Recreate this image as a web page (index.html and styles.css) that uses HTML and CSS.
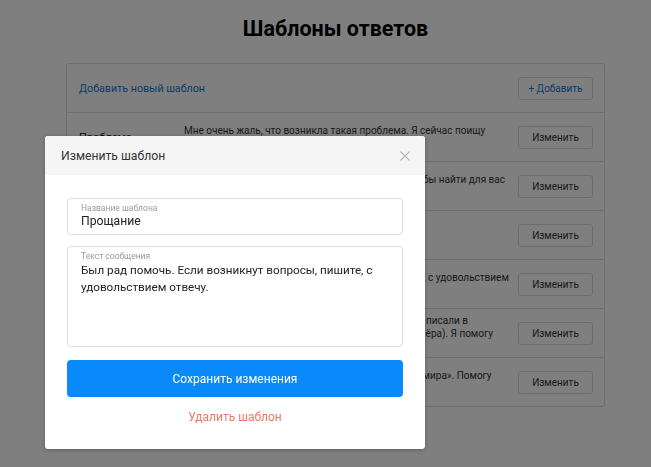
FILE: index.html
```html
<!DOCTYPE html>
<html lang="ru">
<head>
    <meta charset="UTF-8">
    <meta name="viewport" content="width=device-width, initial-scale=1.0">
    <title>Шаблоны ответов</title>
    <link rel="stylesheet" href="styles.css">
</head>
<body>
    <div class="container">
        <h1>Шаблоны ответов</h1>

        <div class="templates">
            <div class="row row-add">
                <span class="add-title">Добавить новый шаблон</span>
                <button class="btn btn-add">+ Добавить</button>
            </div>
            <div class="row">
                <span class="row-name">Проблема</span>
                <span class="row-text">Мне очень жаль, что возникла такая проблема. Я сейчас поищу решение и вернусь к вам.</span>
                <button class="btn">Изменить</button>
            </div>
            <div class="row">
                <span class="row-name">Ожидание</span>
                <span class="row-text">Подождите, пожалуйста, я просмотрю данные, чтобы найти для вас лучший вариант.</span>
                <button class="btn">Изменить</button>
            </div>
            <div class="row">
                <span class="row-name">Приветствие</span>
                <span class="row-text">Здравствуйте! Чем могу помочь?</span>
                <button class="btn">Изменить</button>
            </div>
            <div class="row">
                <span class="row-name">Прощание</span>
                <span class="row-text">Был рад помочь. Если возникнут вопросы, пишите, с удовольствием отвечу.</span>
                <button class="btn">Изменить</button>
            </div>
            <div class="row">
                <span class="row-name">Номер заказа</span>
                <span class="row-text">Подскажите, пожалуйста, номер заказа, о котором писали в поддержку (или номер телефона из профиля партнёра). Я помогу разобраться.</span>
                <button class="btn">Изменить</button>
            </div>
            <div class="row">
                <span class="row-name">Каталог</span>
                <span class="row-text">Все варианты собраны в разделе «Подарки для кумира». Помогу подобрать подарок.</span>
                <button class="btn">Изменить</button>
            </div>
        </div>
    </div>

    <!-- окно редактирования -->
    <div class="overlay"></div>
    <div class="modal">
        <div class="modal-head">
            <span>Изменить шаблон</span>
            <svg class="close" width="10" height="10" viewBox="0 0 10 10">
                <path d="M0.5 0.5L9.5 9.5M9.5 0.5L0.5 9.5" stroke="#b4b4b4" stroke-width="1.1" fill="none"/>
            </svg>
        </div>
        <div class="modal-body">
            <div class="field">
                <div class="field-label">Название шаблона</div>
                <div class="field-value">Прощание</div>
            </div>
            <div class="field field-area">
                <div class="field-label">Текст сообщения</div>
                <div class="field-value">Был рад помочь. Если возникнут вопросы, пишите, с удовольствием отвечу.</div>
            </div>
            <button class="btn-save">Сохранить изменения</button>
            <div class="delete">Удалить шаблон</div>
        </div>
    </div>
</body>
</html>
```

FILE: styles.css
```css
* {
    box-sizing: border-box;
}
body {
    margin: 0;
    font-family: Roboto, 'Liberation Sans', sans-serif;
    background-color: #fff;
    color: #222;
}
.container {
    width: 539px;
    margin-left: 66px;
}
h1 {
    text-align: center;
    font-size: 21.5px;
    line-height: 24px;
    font-weight: 700;
    color: #000;
    margin: 17px 0 22px;
}
.templates {
    border: 1px solid #ddd;
    border-radius: 3px;
}
.row {
    display: grid;
    grid-template-columns: 105px 1fr 75px;
    align-items: center;
    height: 49px;
    padding: 0 11px 0 12px;
    border-bottom: 1px solid #ddd;
}
.row:last-child {
    height: 48px;
    border-bottom: none;
}
.row-name {
    font-size: 11px;
    color: #222;
}
.row-text {
    padding-right: 6px;
    font-size: 10px;
    line-height: 13px;
    color: #333;
}
.add-title {
    grid-column: 1 / 3;
    font-size: 10.7px;
    color: #1577dd;
}
.btn {
    height: 23px;
    padding: 0;
    font-family: inherit;
    font-size: 10px;
    color: #333;
    background-color: #fff;
    border: 1px solid #d9d9d9;
    border-radius: 3px;
}
.btn-add {
    color: #1577dd;
}
.overlay {
    position: fixed;
    inset: 0;
    background-color: rgba(0, 0, 0, 0.5);
}
.modal {
    position: absolute;
    left: 45px;
    top: 136px;
    width: 380px;
    background-color: #fff;
    border-radius: 3px;
    overflow: hidden;
    box-shadow: 0 1px 4px rgba(0, 0, 0, 0.25);
}
.modal-head {
    display: flex;
    justify-content: space-between;
    align-items: center;
    height: 39px;
    padding: 0 15px 0 16px;
    background-color: #f5f5f5;
    font-size: 12.2px;
    color: #333;
}
.modal-body {
    padding: 23px 22px 23px;
}
.field {
    height: 37px;
    padding: 4px 13px 0;
    border: 1px solid #dcdcdc;
    border-radius: 4px;
    margin-bottom: 11px;
}
.field-area {
    height: 101px;
    margin-bottom: 13px;
}
.field-label {
    font-size: 8.5px;
    line-height: 10px;
    color: #9a9a9a;
}
.field-value {
    font-size: 12.2px;
    line-height: 17px;
    color: #222;
}
.field-area .field-value {
    margin-top: 1px;
    font-size: 11.7px;
}
.btn-save {
    display: block;
    width: 100%;
    height: 37px;
    font-family: inherit;
    font-size: 12px;
    color: #fff;
    background-color: #0a89fb;
    border: none;
    border-radius: 4px;
}
.delete {
    margin-top: 12px;
    text-align: center;
    font-size: 12px;
    line-height: 17px;
    color: #ec7763;
}
```
